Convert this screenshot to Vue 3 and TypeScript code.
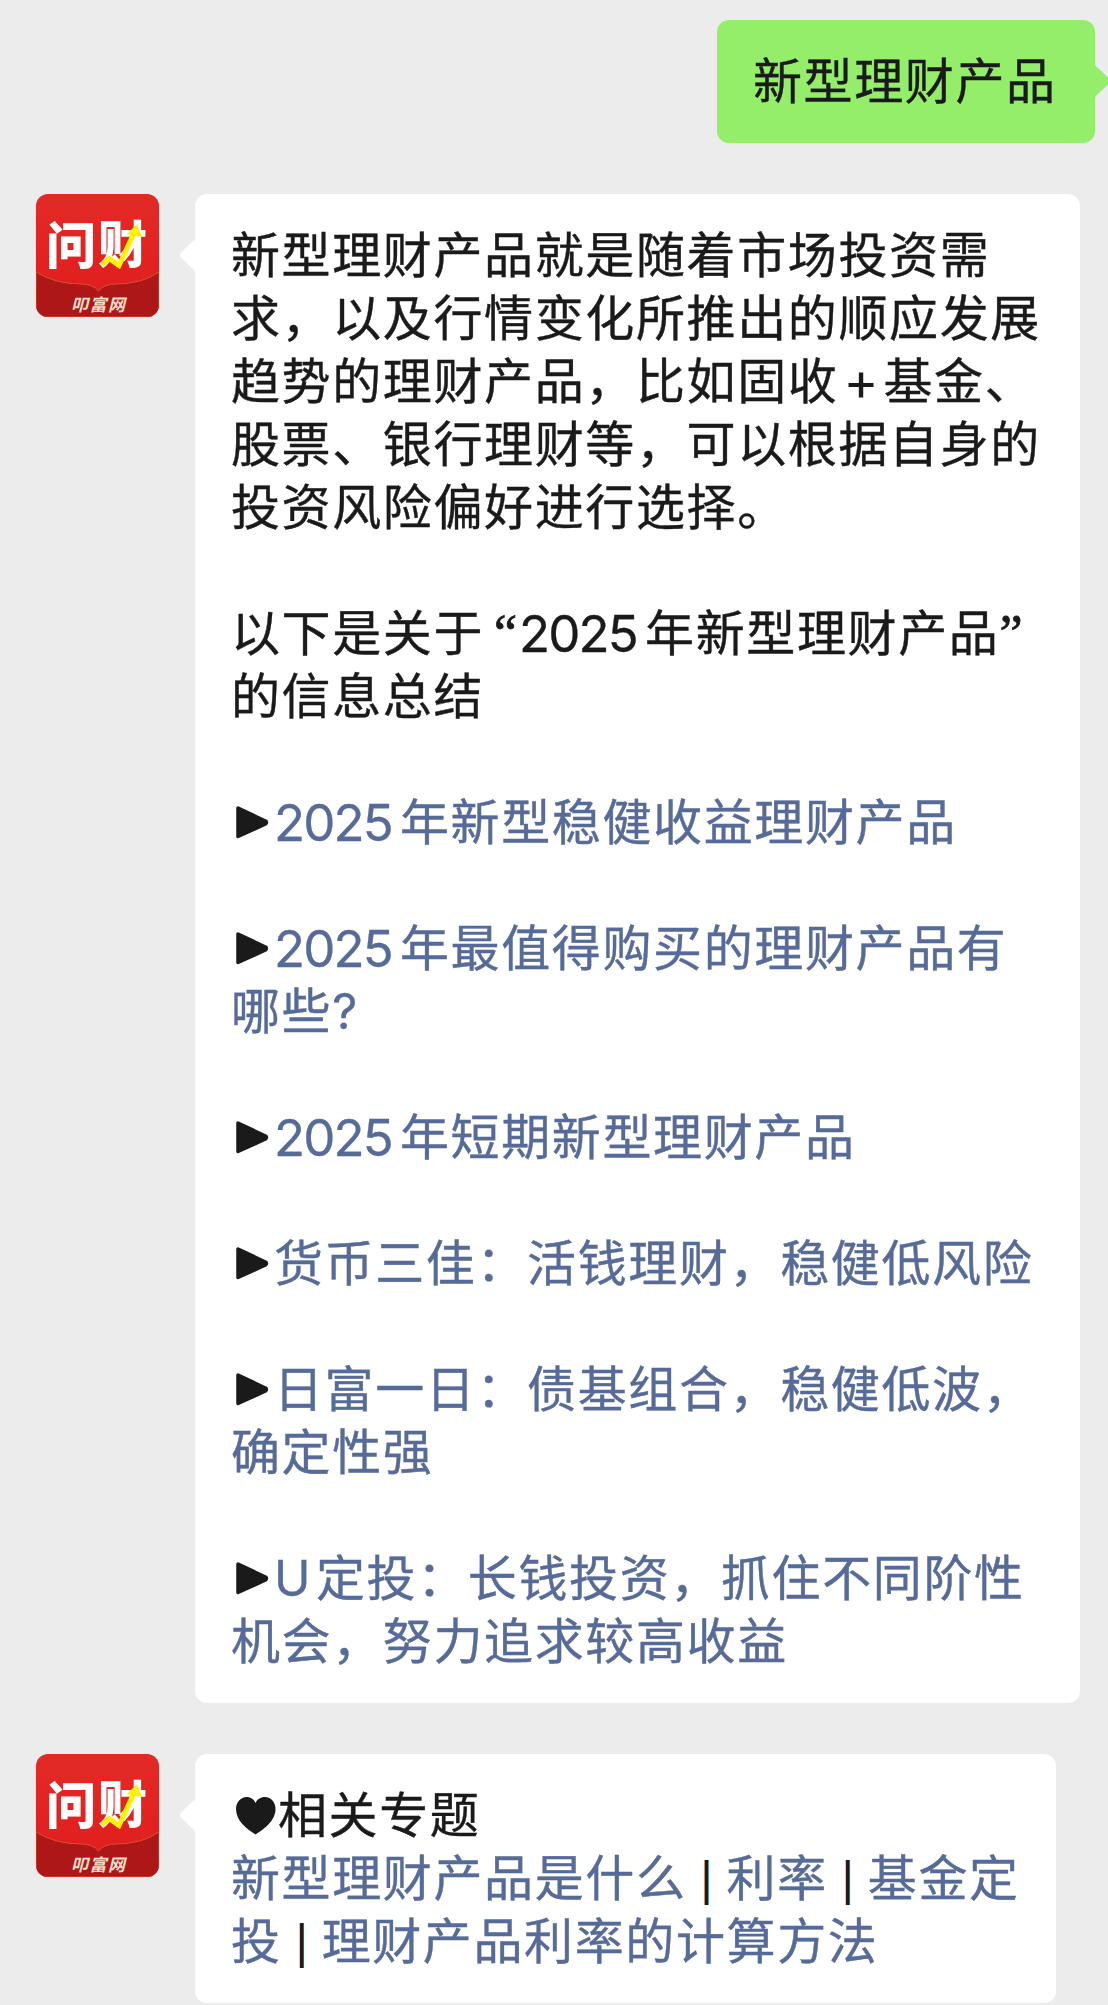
<script setup lang="ts">
type Kind = 'text' | 'link' | 'num' | 'numlink' | 'letter' | 'plus' | 'open' | 'close' | 'ask' | 'bar' | 'play' | 'heart'
interface Segment { kind: Kind; value?: string }
interface Message { name: string; lines: Segment[][] }

const t = (value: string): Segment => ({ kind: 'text', value })
const a = (value: string): Segment => ({ kind: 'link', value })
const play: Segment = { kind: 'play' }
const bar: Segment = { kind: 'bar', value: '|' }
const year: Segment = { kind: 'numlink', value: '2025' }

const messages: Message[] = [
  {
    name: 'summary',
    lines: [
      [t('新型理财产品就是随着市场投资需')],
      [t('求，以及行情变化所推出的顺应发展')],
      [t('趋势的理财产品，比如固收'), { kind: 'plus', value: '+' }, t('基金、')],
      [t('股票、银行理财等，可以根据自身的')],
      [t('投资风险偏好进行选择。')],
      [],
      [t('以下是关于'), { kind: 'open', value: '“' }, { kind: 'num', value: '2025' }, t('年新型理财产品'), { kind: 'close', value: '”' }],
      [t('的信息总结')],
      [],
      [play, year, a('年新型稳健收益理财产品')],
      [],
      [play, year, a('年最值得购买的理财产品有')],
      [a('哪些'), { kind: 'ask', value: '?' }],
      [],
      [play, year, a('年短期新型理财产品')],
      [],
      [play, a('货币三佳：活钱理财，稳健低风险')],
      [],
      [play, a('日富一日：债基组合，稳健低波，')],
      [a('确定性强')],
      [],
      [play, { kind: 'letter', value: 'U' }, a('定投：长钱投资，抓住不同阶性')],
      [a('机会，努力追求较高收益')],
    ],
  },
  {
    name: 'topics',
    lines: [
      [{ kind: 'heart' }, t('相关专题')],
      [a('新型理财产品是什么'), bar, a('利率'), bar, a('基金定')],
      [a('投'), bar, a('理财产品利率的计算方法')],
    ],
  },
]
</script>

<template>
  <main class="chat">
    <section class="row sent">
      <div class="bubble green">
        <div class="line"><span class="text">新型理财产品</span></div>
        <svg class="tail" viewBox="0 0 16 36"><path d="M0 0 Q1 3 4 5 L15 15.500 Q17 18 15 20.500 L4 31 Q1 33 0 36Z" fill="#95ee6a" /></svg>
      </div>
    </section>

    <section v-for="m in messages" :key="m.name" class="row received">
      <svg class="avatar" viewBox="0 0 123 123">
        <defs>
          <linearGradient :id="'red-' + m.name" x1="0" y1="0" x2="0" y2="1">
            <stop offset="0" stop-color="#e32a26" />
            <stop offset="1" stop-color="#e11b1d" />
          </linearGradient>
          <clipPath :id="'clip-' + m.name"><rect width="123" height="123" rx="12" /></clipPath>
        </defs>
        <g :clip-path="'url(#clip-' + m.name + ')'">
          <rect width="123" height="123" :fill="'url(#red-' + m.name + ')'" />
          <path d="M0 78 Q19 90 45 90 Q57 90 62.500 97 Q68 90 80 90 Q106 90 123 78 V123 H0Z" fill="#ae1717" stroke="#d8502d" stroke-width="1" />
          <text class="logo" x="10" y="70" textLength="50" lengthAdjust="spacingAndGlyphs">问</text>
          <text class="logo" x="62" y="69" textLength="49" lengthAdjust="spacingAndGlyphs">财</text>
          <path d="M66 71 L73 64.500 L83 71.500 L98 39" fill="none" stroke="#fff200" stroke-width="5" />
          <path d="M91 40 L101 30 L106 43Z" fill="#fff200" />
          <text class="site" x="35" y="117" textLength="54">叩富网</text>
        </g>
      </svg>
      <div class="bubble white" :class="m.name">
        <svg class="tail" viewBox="0 0 16 36"><path d="M16 0 Q15 3 12 5 L1 15.500 Q-1 18 1 20.500 L12 31 Q15 33 16 36Z" fill="#fff" /></svg>
        <div v-for="(line, i) in m.lines" :key="i" class="line">
          <template v-for="(s, j) in line" :key="j">
            <svg v-if="s.kind === 'play'" class="play" viewBox="0 0 43 63">
              <path d="M7 20 L34.500 33 Q36.500 34.500 34.500 36 L7 48.500Z" fill="#1a1a1a" stroke="#1a1a1a" stroke-width="3.500" stroke-linejoin="round" />
            </svg>
            <svg v-else-if="s.kind === 'heart'" class="heart" viewBox="0 0 47 63">
              <path d="M24.500 53.500 C16 48 5 40 5 28 C5 21 10 16 15.500 16 C20 16 23 18.500 24.500 22 C26 18.500 29.500 16 34 16 C40 16 44.500 21 44.500 28 C44.500 40 33 48 24.500 53.500Z" fill="#1a1a1a" />
            </svg>
            <span v-else :class="s.kind">{{ s.value }}</span>
          </template>
        </div>
      </div>
    </section>
  </main>
</template>

<style>
body { background: #ececec; }
</style>

<style scoped>
.chat {
  display: flex;
  flex-direction: column;
  gap: 51px;
  box-sizing: border-box;
  width: 1108px;
  height: 2005px;
  padding-top: 20px;
  overflow: hidden;
  background: #ececec;
  color: #1a1a1a;
  font-family: "Noto Sans CJK SC", sans-serif;
  font-size: 49px;
}
.row { display: flex; flex: none; }
.sent { justify-content: flex-end; padding-right: 13px; }
.received { padding-left: 36px; gap: 36px; }
.bubble {
  position: relative;
  box-sizing: border-box;
  padding: 27px 0 33px 36px;
  border-radius: 12px;
}
.green { width: 378px; background: #95ee6a; }
.white { background: #fff; }
.summary { width: 885px; }
.topics { width: 861px; }
.tail { position: absolute; width: 16px; height: 36px; }
.white .tail { left: -15px; top: 43px; }
.green .tail { right: -15px; top: 43px; }
.avatar { width: 123px; height: 123px; flex: none; }
.logo { font: 900 50px "Noto Sans CJK SC", sans-serif; fill: #fff; }
.site { font: italic 700 17px "Noto Sans CJK SC", sans-serif; fill: #f6dfc8; }
.line { display: flex; height: 63px; line-height: 63px; white-space: nowrap; }
.line > * { flex: none; }
.text, .link { height: 63px; line-height: 62px; letter-spacing: 1.62px; -webkit-text-stroke: 0.4px currentColor; }
.link, .numlink, .letter, .ask { color: #576b99; }
.num, .numlink, .letter, .plus, .ask, .open, .close, .bar { height: 63px; line-height: 69px; font-family: Inter, sans-serif; }
.num, .numlink { width: 126px; font-size: 51px; letter-spacing: -1.9px; }
.num, .numlink, .letter, .ask { -webkit-text-stroke: 0.3px currentColor; }
.letter { width: 42px; }
.plus { width: 45px; font-size: 53px; text-align: center; }
.line .open, .line .close { font-family: "Liberation Serif", serif; font-size: 52px; -webkit-text-stroke: 0.8px currentColor; }
.line .open { width: 35px; padding-right: 2px; box-sizing: border-box; text-align: right; }
.line .bar { width: 40px; text-align: center; font-family: "Liberation Sans", sans-serif; font-size: 48px; }
.play { width: 43px; height: 63px; }
.heart { width: 47px; height: 63px; }
</style>
